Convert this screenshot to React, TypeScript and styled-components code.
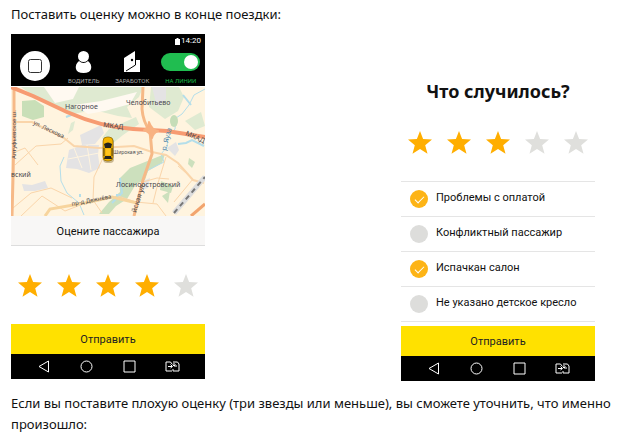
import React, { useState } from "react";
import styled, { createGlobalStyle } from "styled-components";

const GlobalStyle = createGlobalStyle`
  * { box-sizing: border-box; }
  body {
    margin: 0;
    background: #fff;
    color: #111;
    font-family: Roboto, "Noto Sans", sans-serif;
  }
  button { font-family: inherit; border: 0; padding: 0; cursor: pointer; }
`;

const Page = styled.main`
  padding: 4px 11px 0;
`;

const Paragraph = styled.p`
  margin: 0;
  font-family: "Noto Sans", sans-serif;
  font-size: 13px;
  line-height: 21px;
`;

const Phones = styled.div`
  display: grid;
  grid-template-columns: repeat(3, 1fr);
  column-gap: 1px;
  align-items: end;
  padding: 9px 34px 12px 0;
`;

const Phone = styled.section<{ $last?: boolean }>`
  grid-column: ${(p) => (p.$last ? 3 : 1)};
  margin-bottom: ${(p) => (p.$last ? 0 : 2)}px;
  min-width: 0;
`;

const Header = styled.header`
  background: #000;
  color: #fff;
  padding-bottom: 2px;
  border-bottom: 1px solid #fff;
`;

const Status = styled.div`
  display: flex;
  justify-content: flex-end;
  align-items: center;
  gap: 1px;
  height: 14px;
  padding-right: 4px;
  font: 8px/14px Roboto, sans-serif;
`;

const Tools = styled.div`
  display: grid;
  grid-template-columns: repeat(4, 1fr);
  height: 36px;
`;

const Tool = styled.button`
  display: flex;
  flex-direction: column;
  align-items: center;
  justify-content: space-between;
  padding-top: 3px;
  background: none;
  color: #aaa;
  font-size: 6px;
  line-height: 7px;
`;

const Stop = styled.button`
  display: grid;
  place-items: center;
  justify-self: center;
  align-self: center;
  width: 30px;
  height: 30px;
  border-radius: 50%;
  background: #fff;
`;

const SwitchLabel = styled.label`
  display: flex;
  flex-direction: column;
  align-items: center;
  justify-content: space-between;
  padding-top: 5px;
  color: #1ab544;
  font-size: 6px;
  line-height: 7px;
`;

const Switch = styled.input`
  appearance: none;
  display: flex;
  justify-content: flex-start;
  align-items: center;
  width: 39px;
  height: 18px;
  margin: 0;
  padding: 2px;
  border-radius: 9px;
  background: #777;
  &:checked { justify-content: flex-end; background: #20bd50; }
  &::before {
    content: "";
    width: 14px;
    height: 14px;
    border-radius: 50%;
    background: #fff;
  }
`;

const MapView = styled.svg`
  display: block;
  width: 100%;
  height: 129px;
`;

const RateTitle = styled.h2`
  margin: 0;
  height: 30px;
  border-bottom: 1px solid #ddd;
  background: #f8f7f6;
  text-align: center;
  font-size: 11px;
  font-weight: 400;
  line-height: 32px;
`;

const Question = styled.h2`
  margin: 0;
  text-align: center;
  font-family: "Noto Sans", sans-serif;
  font-size: 18px;
  font-weight: 700;
  line-height: 24px;
`;

const Stars = styled.div`
  display: grid;
  grid-template-columns: repeat(5, 1fr);
  place-items: center;
  height: 78px;
`;

const StarButton = styled.button<{ $on: boolean }>`
  display: flex;
  background: none;
  color: ${(p) => (p.$on ? "#ffae00" : "#dfdfdc")};
`;

const Reasons = styled.ul`
  list-style: none;
  margin: 0 0 4px;
  padding: 0;
  border-top: 1px solid #e5e5e5;
`;

const Reason = styled.li`
  border-bottom: 1px solid #e5e5e5;
`;

const ReasonLabel = styled.label`
  display: flex;
  align-items: center;
  gap: 8px;
  height: 34px;
  padding-left: 9px;
  font-size: 11px;
  line-height: 16px;
`;

const ReasonText = styled.span`
  padding-bottom: 2px;
  white-space: nowrap;
`;

const Check = styled.input`
  appearance: none;
  display: grid;
  place-items: center;
  flex: none;
  width: 18px;
  height: 18px;
  margin: 0;
  border-radius: 50%;
  background: #dddddb;
  &:checked { background: #fdb416; }
  &:checked::before {
    content: "";
    width: 8px;
    height: 4px;
    margin-bottom: 2px;
    border: solid #fff;
    border-width: 0 0 1px 1px;
    transform: rotate(-45deg);
  }
`;

const Submit = styled.button`
  display: block;
  width: 100%;
  height: 30px;
  padding-top: 2px;
  background: #ffe100;
  color: #222;
  font-size: 11px;
  line-height: 28px;
`;

const NavBar = styled.nav`
  display: grid;
  grid-template-columns: repeat(4, 1fr);
  height: 25px;
  padding: 0 11px;
  background: #000;
`;

const NavButton = styled.button`
  display: grid;
  place-items: center;
  background: none;
  color: #fff;
`;

function StarRow({ initial }: { initial: number }) {
  const [value, setValue] = useState(initial);
  return (
    <Stars role="group" aria-label="Оценка">
      {[1, 2, 3, 4, 5].map((n) => (
        <StarButton key={n} type="button" $on={n <= value} aria-label={`${n} из 5`} onClick={() => setValue(n)}>
          <svg width="24" height="23" viewBox="0 0 24 23" fill="currentColor">
            <path d="M12 0 15.1 8 24 8.6 17.2 14.2 19.5 22.7 12 18 4.5 22.7 6.8 14.2 0 8.6 8.9 8Z" />
          </svg>
        </StarButton>
      ))}
    </Stars>
  );
}

function Footer() {
  return (
    <>
      <Submit type="button">Отправить</Submit>
      <NavBar aria-label="Системная навигация">
        <NavButton type="button" aria-label="Назад">
          <svg width="12" height="13" viewBox="0 0 12 13" fill="none" stroke="currentColor">
            <path d="M10.5 1v11L1 6.5Z" />
          </svg>
        </NavButton>
        <NavButton type="button" aria-label="Домой">
          <svg width="13" height="13" viewBox="0 0 13 13" fill="none" stroke="currentColor">
            <circle cx="6.5" cy="6.5" r="5.5" />
          </svg>
        </NavButton>
        <NavButton type="button" aria-label="Недавние">
          <svg width="13" height="13" viewBox="0 0 13 13" fill="none" stroke="currentColor">
            <path d="M1 1h11v11H1Z" />
          </svg>
        </NavButton>
        <NavButton type="button" aria-label="Сменить SIM-карту">
          <svg width="15" height="11" viewBox="0 0 15 11" fill="none" stroke="currentColor">
            <path d="M7 3 5.5 1H1v9h6M8 1h4.5L14 3v7H8V8M3 5.500h4M5.500 3.500 7.500 5.500 5.500 7M12 5H9V2M7.500 3.500 9 5l1.500-1.500" />
          </svg>
        </NavButton>
      </NavBar>
    </>
  );
}

function CityMap() {
  return (
    <MapView viewBox="0 0 194 129" preserveAspectRatio="xMidYMid slice" role="img" aria-label="Карта">
      <rect width="194" height="129" fill="#fff4df" />
      <g fill="#dfead1">
        <path d="M10 0H132L128 10 116 20 121 31 107 29 83 23 62 27 47 22 30 14Z" />
        <path d="M11 14 24 13 33 19V30L22 33 11 29Z" fill="#c9dfb8" />
        <path d="M140 0h28l5 10-6 14-13 8-16-12Z" />
        <path d="M174 34l16-9 4 14-10 4Z" />
        <path d="M98 42 125 30 128 37 112 48 101 57 91 51Z" />
        <path d="M134 75 154 67 151 76 137 84 134 93 125 97 116 112 105 119 98 127H88L98 115 109 105 108 92 119 81Z" fill="#cce0bd" />
        <path d="M150 94 162 99 160 106 149 103ZM151 109 159 104 157 116ZM178 71l6 4-3 6-4-4Z" fill="#cce0bd" />
        <path d="M60 36 64 34 62 43 57 47Z" />
      </g>
      <g fill="#fff9f1">
        <path d="M33 0h35l-6 12-18 4Z" />
        <path d="M63 18 90 14 126 5 119 17 94 24 77 27Z" />
      </g>
      <g fill="#e4e3e4">
        <path d="M69 48 90 38 93 46 84 57 71 58Z" />
        <path d="M58 63 71 58 88 58 87 68 89 81 78 86 66 82 55 81Z" />
        <path d="M11 97 21 98 34 94 37 101 24 104 13 104Z" />
        <path d="M130 95l9-4-2 10-6 2Z" />
        <path d="M141 0h14v12l-9 8Z" />
        <path d="M156 61l9-6 3 8-4 6Z" />
      </g>
      <g stroke="#fff4df" strokeWidth="1">
        <path d="M63 61 71 81M76 58 80 83M57 72 88 66" />
      </g>
      <g fill="none" stroke="#b4deea">
        <path d="M194 2 183 8 178 18 171 27 165 31 164 42 157 50 156 60 150 67 153 75 137 83 132 93" />
        <path d="M53 70 49 79 50 94 56 106 68 116 73 128" />
        <path d="M109 91 111 106 101 116M167 57 175 56 181 53 193 59M172 8l8 10M55 30l8-3" strokeWidth="2" />
        <path d="M69 107v3M105 108h5" strokeWidth="2" />
      </g>
      <ellipse cx="163" cy="34" rx="4" ry="6" fill="#c5ddb8" />
      <g fill="none" stroke="#fad5aa" strokeWidth="1">
        <path d="M4 35H21L53 51 63 59 88 61 123 59 141 65 155 68 167 76 182 93 193 96" strokeWidth="2" />
        <path d="M4 65 14 61 27 78M4 78 25 59 50 57 57 51M2 121 20 106 40 101 61 111M10 129 31 109 54 124 77 115" />
        <path d="M92 60V71L83 90 82 113 91 126M107 109 125 115 146 117 155 129M142 116 147 96 155 70M132 95 146 91 158 92M167 79 182 92 163 115" />
      </g>
      <path d="M34 129 39 122 74 116 101 110 126 116" fill="none" stroke="#f7d49d" strokeWidth="3" />
      <g fill="none" strokeLinejoin="round">
        <path d="M3 0V40L2 90 1 129M132 0 131 22Q132 35 139 44L141 67 132 93 123 129" stroke="#f6b987" strokeWidth="3" />
        <path d="M0 0 22 9 56 25Q90 40 122 42L156 44 194 50" stroke="#f79b72" strokeWidth="4" />
        <path d="M180 129 194 117" stroke="#f2a46e" strokeWidth="3" />
        <path d="M133 43Q138 40 138 35Q141 43 147 44Q142 46 141 51Q139 45 133 43Z" stroke="#f8b282" strokeWidth="2" fill="#f8b282" />
        <path d="M163 126 194 90" stroke="#ddd" strokeWidth="5" />
        <path d="M163 126 194 90" stroke="#777" strokeWidth="2" strokeDasharray="5 4" />
      </g>
      <g fill="#4a4a50" fontFamily="Noto Sans, sans-serif" fontSize="7">
        <text x="54" y="22">Нагорное</text>
        <text x="115" y="18">Челобитьево</text>
        <text x="105" y="100">Лосиноостровский</text>
        <text x="0" y="90">вский</text>
        <text x="92" y="40" transform="rotate(7 92 40)">МКАД</text>
        <text x="174" y="48" transform="rotate(24 174 48)">МКАД</text>
        <text x="22" y="37" transform="rotate(26 22 37)" fontSize="6">ул. Лескова</text>
        <text x="102" y="67" fontSize="5">Широкая ул.</text>
        <text x="61" y="119" transform="rotate(-11 61 119)" fontSize="6">пр-д Дежнёва</text>
        <text x="125" y="126" transform="rotate(-72 125 126)">йская ул.</text>
        <text x="5" y="72" transform="rotate(-90 5 72)" fontSize="6">Алтуфьевское ш.</text>
        <text x="155" y="64" transform="rotate(-76 155 64)" fill="#5186aa">р. Яуза</text>
      </g>
      <rect x="92" y="51" width="11" height="25" rx="4" fill="#967b43" opacity=".5" />
      <rect x="92" y="50" width="10" height="24" rx="4" fill="#f6b400" stroke="#765500" strokeWidth=".6" />
      <path d="M93 57Q97 54 101 57L100 61H94ZM94 69H100L101 72H93Z" fill="#25231d" />
      <path d="M93 61v8M101 61v8" stroke="#493b17" />
      <rect x="95" y="62" width="4" height="6" fill="#ffc31c" />
    </MapView>
  );
}

const reasons = [
  { text: "Проблемы с оплатой", checked: true },
  { text: "Конфликтный пассажир", checked: false },
  { text: "Испачкан салон", checked: true },
  { text: "Не указано детское кресло", checked: false },
];

export default function App() {
  return (
    <Page>
      <GlobalStyle />
      <Paragraph>Поставить оценку можно в конце поездки:</Paragraph>
      <Phones>
        <Phone>
          <Header>
            <Status>
              <svg width="5" height="7" viewBox="0 0 5 7" fill="#fff">
                <path d="M1.500 0h2v1H5v6H0V1h1.500Z" />
              </svg>
              14:20
            </Status>
            <Tools>
              <Stop type="button" aria-label="Стоп">
                <svg width="16" height="16" viewBox="0 0 16 16" fill="none" stroke="#333">
                  <rect x="1.500" y="1.500" width="13" height="13" rx="2" />
                </svg>
              </Stop>
              <Tool type="button">
                <svg width="17" height="22" viewBox="0 0 17 22" fill="#fff">
                  <circle cx="8.500" cy="5.500" r="5.500" />
                  <path d="M4 10Q8.500 14 13 10 17 13 16 18 15 22 8.500 22 2 22 1 18 0 13 4 10Z" />
                </svg>
                ВОДИТЕЛЬ
              </Tool>
              <Tool type="button">
                <svg width="18" height="22" viewBox="0 0 18 22" fill="#fff">
                  <path d="M1 7 12 0V9H17V21H1Z" />
                  <path d="M12.500 8V14L3 20" fill="none" stroke="#000" />
                  <circle cx="9" cy="9" r="1.200" fill="#000" />
                </svg>
                ЗАРАБОТОК
              </Tool>
              <SwitchLabel>
                <Switch type="checkbox" role="switch" defaultChecked />
                НА ЛИНИИ
              </SwitchLabel>
            </Tools>
          </Header>
          <CityMap />
          <RateTitle>Оцените пассажира</RateTitle>
          <StarRow initial={4} />
          <Footer />
        </Phone>
        <Phone $last>
          <Question>Что случилось?</Question>
          <StarRow initial={3} />
          <Reasons>
            {reasons.map((r) => (
              <Reason key={r.text}>
                <ReasonLabel>
                  <Check type="checkbox" defaultChecked={r.checked} />
                  <ReasonText>{r.text}</ReasonText>
                </ReasonLabel>
              </Reason>
            ))}
          </Reasons>
          <Footer />
        </Phone>
      </Phones>
      <Paragraph>
        Если вы поставите плохую оценку (три звезды или меньше), вы сможете уточнить, что именно произошло:
      </Paragraph>
    </Page>
  );
}
